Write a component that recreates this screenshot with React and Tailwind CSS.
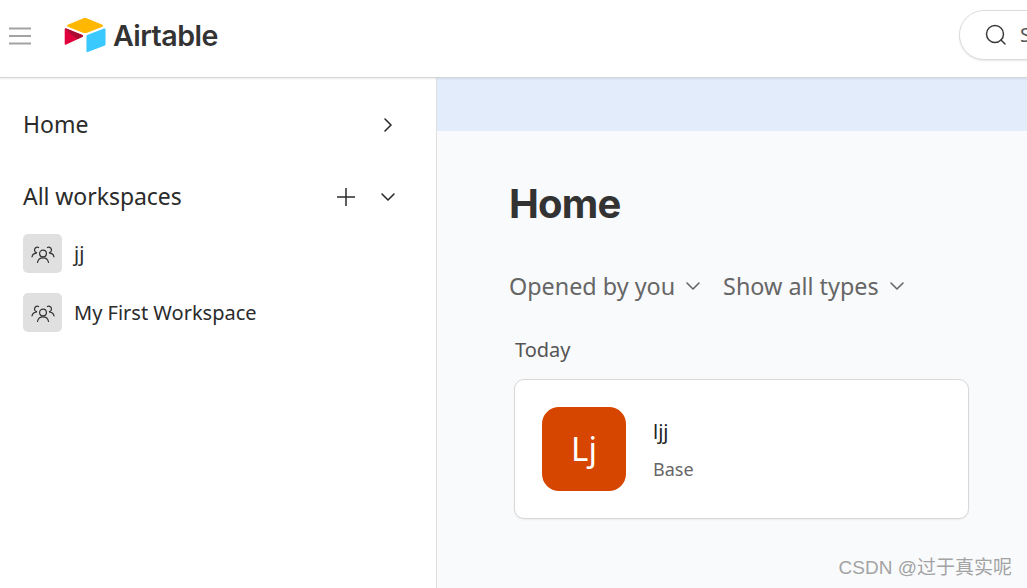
import React from "react";

const Chevron = ({ dir = "down", className = "" }) => (
  <svg width="16" height="16" viewBox="0 0 16 16" fill="none" stroke="currentColor" strokeWidth="1.6" strokeLinecap="round" strokeLinejoin="round" className={className}>
    {dir === "down" ? <path d="M2 5 8 11l6-6" /> : <path d="M5 2 11 8 5 14" />}
  </svg>
);

const Group = () => (
  <svg width="24" height="24" viewBox="0 0 24 24" fill="none" stroke="#333" strokeWidth="1.2" strokeLinecap="round" strokeLinejoin="round">
    <circle cx="12" cy="11.500" r="3.400" />
    <path d="M6.500 20.500c.5-3 2.600-4.700 5.500-4.700s5 1.700 5.500 4.700" />
    <path d="M7.600 5.500A2.800 2.800 0 1 0 5.600 10.700" />
    <path d="M1 14.800c.4-2 2-3.500 4.200-3.700" />
    <path d="M16.400 5.500A2.800 2.800 0 1 1 18.400 10.700" />
    <path d="M23 14.800c-.4-2-2-3.500-4.200-3.700" />
  </svg>
);

const Workspace = ({ name }) => (
  <div className="flex items-center gap-[12px] h-[39px]">
    <div className="w-[39px] h-[39px] rounded-[5px] bg-[#e0e0e0] flex items-center justify-center">
      <Group />
    </div>
    <span className="text-[20px] text-[#2b2b2b]">{name}</span>
  </div>
);

export default function App() {
  return (
    <div className="w-[1027px] h-[588px] overflow-hidden flex flex-col bg-white font-['Noto_Sans',sans-serif]">
      <header className="h-[78px] shrink-0 border-b border-[#d4d4d4] shadow-[0_1px_2px_rgba(0,0,0,0.08)] flex items-center pl-[8px] relative z-10 bg-white">
        <svg width="24" height="20" viewBox="0 0 24 20" stroke="#a3a3a3" strokeWidth="2" className="mb-[6px]">
          <path d="M1 2.500h22M1 10h22M1 17.500h22" />
        </svg>
        <div className="flex items-center ml-[32px] mb-[8px]">
          <svg width="42" height="36" viewBox="8 8 182 152">
            <path fill="#FFB700" d="M90.0389 12.3675L24.0799 39.6605C20.4119 41.1785 20.4499 46.3885 24.1409 47.8515L90.3759 74.1175C96.1959 76.4255 102.6769 76.4255 108.4959 74.1175L174.7319 47.8515C178.4219 46.3885 178.4609 41.1785 174.7919 39.6605L108.8339 12.3675C102.8159 9.8775 96.0559 9.8775 90.0389 12.3675" />
            <path fill="#39C9FF" d="M105.3122 88.4608V154.0768C105.3122 157.1978 108.4592 159.3348 111.3602 158.1848L185.1662 129.5368C186.8512 128.8688 187.9562 127.2408 187.9562 125.4288V59.8128C187.9562 56.6918 184.8092 54.5548 181.9082 55.7048L108.1022 84.3528C106.4182 85.0208 105.3122 86.6488 105.3122 88.4608" />
            <path fill="#E0003C" d="M88.0781 91.8464L66.1741 102.4224L63.9501 103.4974L17.7121 125.6524C14.7811 127.0664 11.0401 124.9304 11.0401 121.6744V60.0884C11.0401 58.9104 11.6441 57.8934 12.4541 57.1274C12.7921 56.7884 13.1751 56.5094 13.5731 56.2884C14.6781 55.6254 16.2541 55.4484 17.5941 55.9784L87.7101 83.7594C91.2741 85.1734 91.5541 90.1674 88.0781 91.8464" />
            <path fill="#A80C33" d="M88.0781 91.8464L66.1741 102.4224L12.4541 57.1274C12.7921 56.7884 13.1751 56.5094 13.5731 56.2884C14.6781 55.6254 16.2541 55.4484 17.5941 55.9784L87.7101 83.7594C91.2741 85.1734 91.5541 90.1674 88.0781 91.8464" />
          </svg>
          <span className="ml-[7px] mt-[4px] text-[28.6px] font-semibold text-[#333] tracking-[-0.55px] font-['Inter',sans-serif] leading-none">Airtable</span>
        </div>
        <div className="absolute left-[959px] top-[10px] w-[120px] h-[50px] rounded-[25px] border border-[#dcdcdc] shadow-[0_1px_2px_rgba(0,0,0,0.1)] flex items-center pl-[25px] gap-[13px] text-[#555] bg-white">
          <svg width="22" height="22" viewBox="0 0 22 22" fill="none" stroke="#3a3a3a" strokeWidth="1.5" strokeLinecap="round" className="shrink-0">
            <circle cx="10" cy="10" r="8.500" />
            <path d="M16 16 20 20" />
          </svg>
          <span className="text-[20px] leading-none">Search</span>
        </div>
      </header>
      <div className="flex flex-1 min-h-0">
        <aside className="w-[437px] shrink-0 border-r border-[#dedede] pl-[23px] pr-[40px] pt-[29px] bg-white">
          <div className="flex items-center justify-between h-[34px] text-[#2b2b2b]">
            <span className="text-[23px]">Home</span>
            <Chevron dir="right" className="mt-[2px]" />
          </div>
          <div className="flex items-center justify-between h-[34px] mt-[38px] text-[#2b2b2b]">
            <span className="text-[23px] tracking-[-0.05px]">All workspaces</span>
            <div className="flex items-center gap-[23px] mt-[1px]">
              <svg width="22" height="22" viewBox="0 0 22 22" stroke="currentColor" strokeWidth="1.500">
                <path d="M11 2v18M2 11h18" />
              </svg>
              <Chevron dir="down" />
            </div>
          </div>
          <div className="flex flex-col gap-[20px] mt-[21px]">
            <Workspace name="jj" />
            <Workspace name="My First Workspace" />
          </div>
        </aside>
        <main className="flex-1 min-w-0 bg-[#f9fafc] relative">
          <div className="h-[53px] bg-[#e3ecfb]" />
          <div className="pl-[72px] pr-[58px]">
            <h1 className="mt-[49px] text-[40px] leading-[48px] font-bold text-[#333] tracking-[-0.8px] font-['Inter',sans-serif]">Home</h1>
            <div className="flex items-center gap-[22px] mt-[41px] text-[#666] h-[34px]">
              <div className="flex items-center gap-[10px]">
                <span className="text-[23.35px]">Opened by you</span>
                <Chevron dir="down" />
              </div>
              <div className="flex items-center gap-[10px]">
                <span className="text-[23.35px]">Show all types</span>
                <Chevron dir="down" />
              </div>
            </div>
            <div className="mt-[32px] ml-[6px] text-[20px] leading-[30px] text-[#555]">Today</div>
            <div className="mt-[14px] ml-[5px] w-[455px] h-[140px] rounded-[10px] border border-[#d8d8d8] bg-white shadow-[0_1px_2px_rgba(0,0,0,0.06)] flex items-center pl-[27px]">
              <div className="w-[84px] h-[84px] rounded-[17px] bg-[#d74600] flex items-center justify-center text-white text-[33px]">Lj</div>
              <div className="ml-[27px] flex flex-col pt-[2px]">
                <span className="text-[20px] leading-[28px] text-[#222]">ljj</span>
                <span className="mt-[10px] text-[18px] leading-[26px] text-[#666]">Base</span>
              </div>
            </div>
          </div>
          <div className="absolute right-[15px] bottom-[7px] text-[19px] leading-[26px] text-[#a3a3a3] font-['Liberation_Sans','Noto_Sans_CJK_SC',sans-serif]">CSDN @过于真实呢</div>
        </main>
      </div>
    </div>
  );
}
